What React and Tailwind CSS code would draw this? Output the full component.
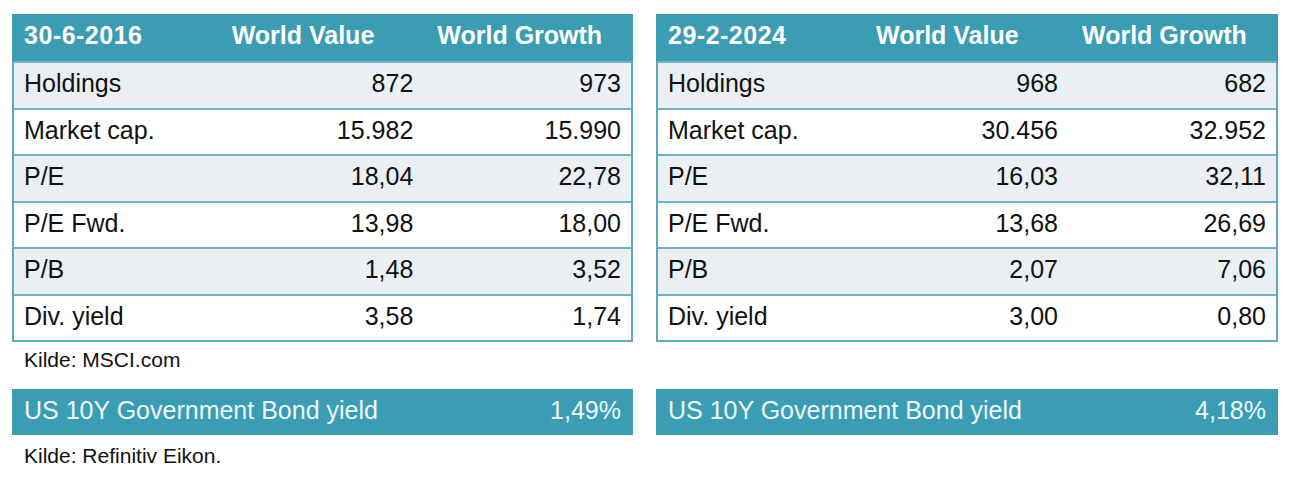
const tables = [
  {
    date: '30-6-2016',
    rows: [
      ['Holdings', '872', '973'],
      ['Market cap.', '15.982', '15.990'],
      ['P/E', '18,04', '22,78'],
      ['P/E Fwd.', '13,98', '18,00'],
      ['P/B', '1,48', '3,52'],
      ['Div. yield', '3,58', '1,74'],
    ],
    bond: '1,49%',
  },
  {
    date: '29-2-2024',
    rows: [
      ['Holdings', '968', '682'],
      ['Market cap.', '30.456', '32.952'],
      ['P/E', '16,03', '32,11'],
      ['P/E Fwd.', '13,68', '26,69'],
      ['P/B', '2,07', '7,06'],
      ['Div. yield', '3,00', '0,80'],
    ],
    bond: '4,18%',
  },
];

function KeyTable({ data }) {
  return (
    <div className="border-2 border-[#5ea9bc] border-t-0">
      <div className="grid grid-cols-3 h-[47px] items-center bg-[#3a9db4] pb-[4px] text-white font-bold text-[25px] -mx-[2px] px-[2px]">
        <div className="pl-[10px] tracking-[0.5px]">{data.date}</div>
        <div className="pl-[12px]">World Value</div>
        <div className="pl-[12px]">World Growth</div>
      </div>
      {data.rows.map((r, i) => (
        <div
          key={r[0]}
          className={
            'grid grid-cols-3 h-[46.5px] items-center border-t-2 border-[#6fb2c3] pb-[3px] text-[25px] text-[#111] ' +
            (i % 2 === 0 ? 'bg-[#e9eff3]' : 'bg-white')
          }
        >
          <div className="pl-[10px]">{r[0]}</div>
          <div className="text-right pr-[12px]">{r[1]}</div>
          <div className="text-right pr-[10px]">{r[2]}</div>
        </div>
      ))}
    </div>
  );
}

function BondBar({ value }) {
  return (
    <div className="flex h-[46px] items-center justify-between bg-[#3a9db4] px-[12px] pb-[3px] text-[25px] text-[#eef8fa]">
      <span>US 10Y Government Bond yield</span>
      <span>{value}</span>
    </div>
  );
}

export default function App() {
  return (
    <div
      className="min-h-[479px] w-[1290px] bg-white pl-[12px] pt-[14px]"
      style={{ fontFamily: '"Liberation Sans", Arial, sans-serif' }}
    >
      <div className="grid grid-cols-[621px_622px] gap-x-[23px]">
        <KeyTable data={tables[0]} />
        <KeyTable data={tables[1]} />

        <div className="mt-[6px] h-[24px] pl-[12px] text-[21px] leading-[24px] text-[#111]">
          Kilde: MSCI.com
        </div>
        <div />

        <div className="mt-[17px]">
          <BondBar value={tables[0].bond} />
        </div>
        <div className="mt-[17px]">
          <BondBar value={tables[1].bond} />
        </div>

        <div className="mt-[9px] h-[24px] pl-[12px] text-[21px] leading-[24px] text-[#111]">
          Kilde: Refinitiv Eikon.
        </div>
        <div />
      </div>
    </div>
  );
}
